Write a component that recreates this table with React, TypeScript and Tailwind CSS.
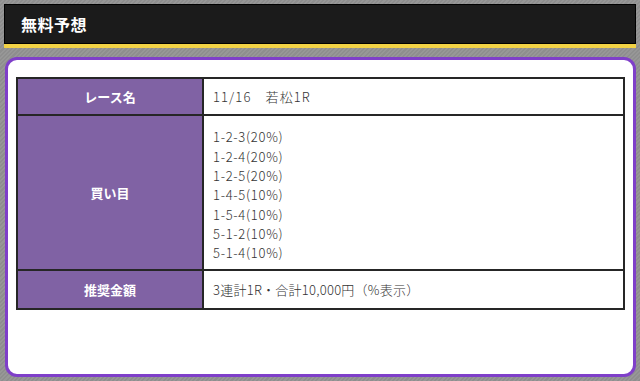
export default function App() {
  const picks = [
    "1-2-3(20%)",
    "1-2-4(20%)",
    "1-2-5(20%)",
    "1-4-5(10%)",
    "1-5-4(10%)",
    "5-1-2(10%)",
    "5-1-4(10%)",
  ];

  const font = { fontFamily: '"Noto Sans CJK JP", "Noto Sans", sans-serif' };

  return (
    <div
      className="w-[640px] h-[381px] overflow-hidden bg-[repeating-linear-gradient(135deg,#8e8e8e_0px,#8e8e8e_1.5px,#979797_1.5px,#979797_3px)] pt-[4px] pl-[4px] pr-[4px]"
      style={font}
    >
      {/* Section heading */}
      <div className="border-b-[4px] border-[#f2d245]">
        <div className="h-[40px] bg-[#1b1b1b] border border-black flex items-center pl-[16px]">
          <span className="text-white text-[16px] font-bold leading-none tracking-[0.5px]">無料予想</span>
        </div>
      </div>

      {/* Card */}
      <div className="mt-[9px] ml-[1px] h-[320px] rounded-[12px] border-[3px] border-[#7f3fc9] bg-white px-[8px] pt-[17px]">
        <div className="border-2 border-[#262626] text-[13px]">
          <div className="flex h-[37px] border-b-2 border-[#262626]">
            <div className="w-[186px] shrink-0 bg-[#8062a4] border-r-2 border-[#262626] flex items-center justify-center text-white font-bold">
              レース名
            </div>
            <div className="flex-1 flex items-center pl-[9px] text-[#333] font-light tracking-[1.1px]">
              11/16　若松1R
            </div>
          </div>
          <div className="flex h-[155px] border-b-2 border-[#262626]">
            <div className="w-[186px] shrink-0 bg-[#8062a4] border-r-2 border-[#262626] flex items-center justify-center text-white font-bold">
              買い目
            </div>
            <div className="flex-1 flex flex-col justify-center pt-[5px] pl-[9px] text-[#333] font-light leading-[19.35px] tracking-[0.7px]">
              {picks.map((p) => (
                <div key={p}>{p}</div>
              ))}
            </div>
          </div>
          <div className="flex h-[37px]">
            <div className="w-[186px] shrink-0 bg-[#8062a4] border-r-2 border-[#262626] flex items-center justify-center text-white font-bold">
              推奨金額
            </div>
            <div className="flex-1 flex items-center pl-[9px] text-[#333] font-light tracking-[0.25px]">
              3連計1R・合計10,000円（%表示）
            </div>
          </div>
        </div>
      </div>
    </div>
  );
}
